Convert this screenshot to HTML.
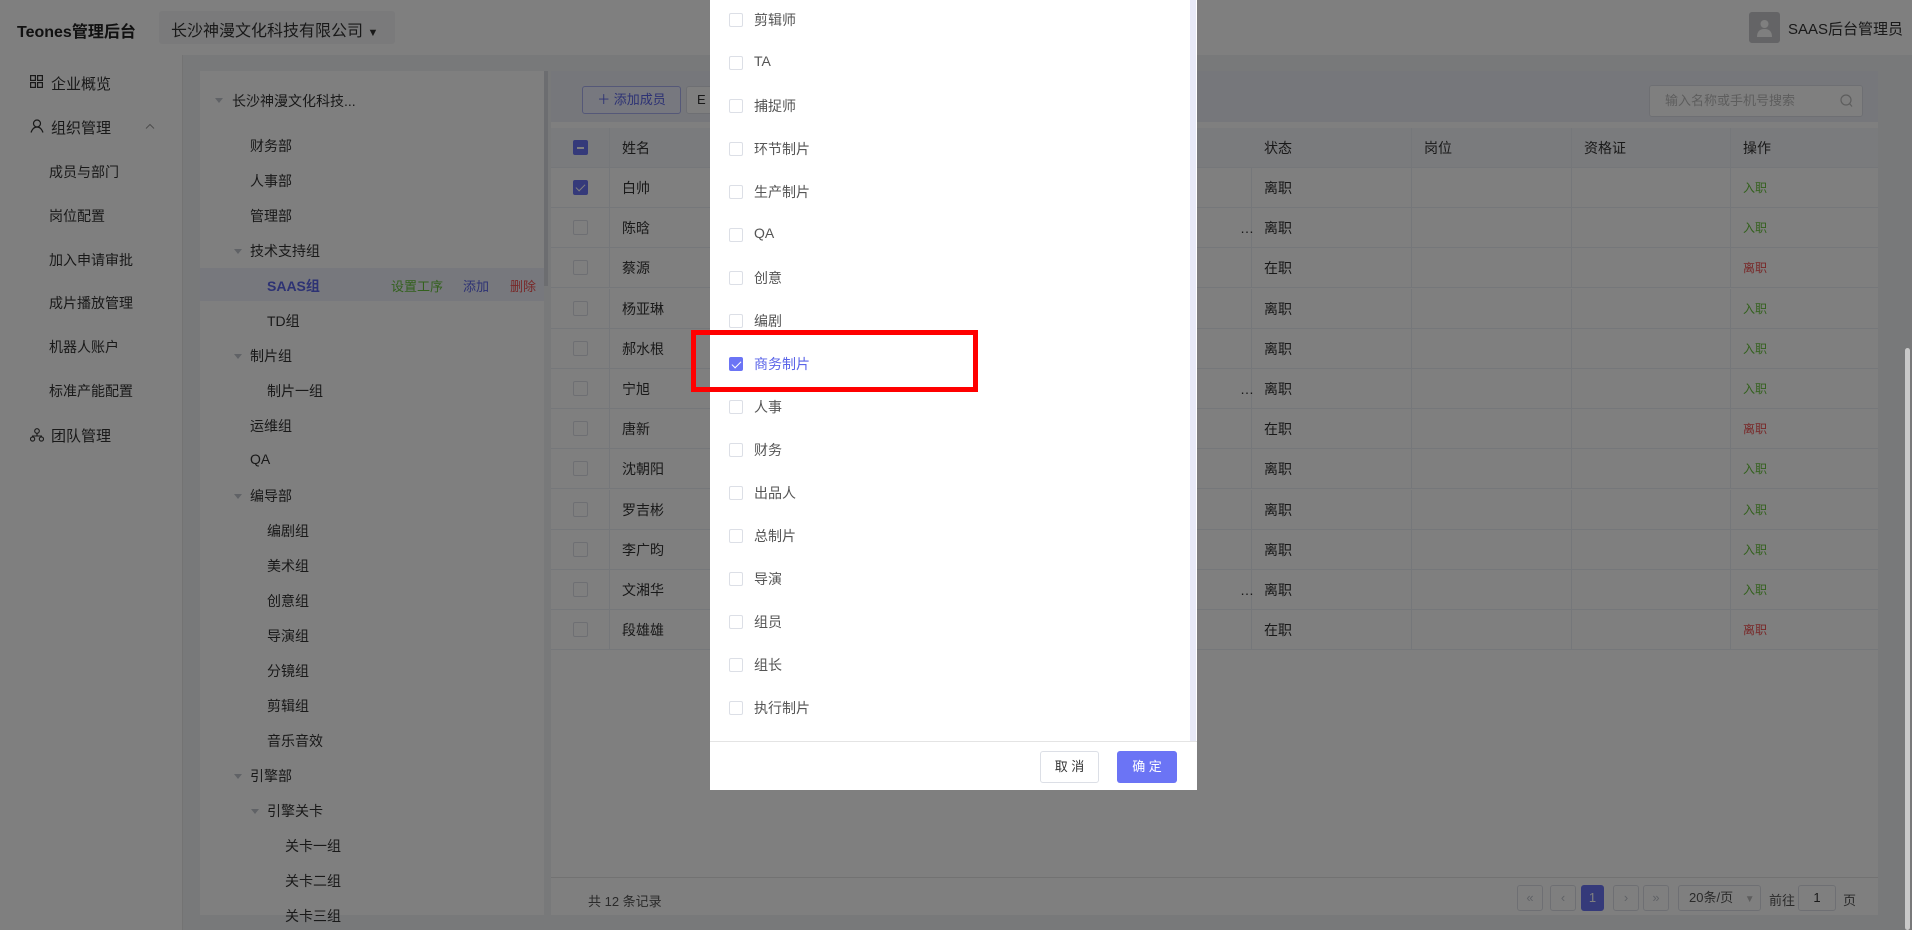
<!DOCTYPE html>
<html><head><meta charset="utf-8"><style>
*{box-sizing:border-box;margin:0;padding:0}
body{width:1912px;height:930px;overflow:hidden;position:relative;background:#f0f2f5;font-family:"Liberation Sans","Noto Sans CJK SC",sans-serif;font-size:14px;color:#333}
.a{position:absolute;white-space:nowrap}
.cb{position:absolute;width:15px;height:15px;border:1px solid #dcdfe6;border-radius:2px;background:#fff}
.cbon{background:#6b74f5;border-color:#6b74f5}
.cbon:after{content:"";position:absolute;left:4px;top:1px;width:4px;height:8px;border:solid #fff;border-width:0 1.5px 1.5px 0;transform:rotate(45deg)}
.cbind{background:#6b74f5;border-color:#6b74f5}
.row{position:absolute;left:551px;width:1327px;height:40px;border-bottom:1px solid #ebeef5;background:#fff}
.cell{position:absolute;top:0;height:40px;line-height:40px;border-right:1px solid #ebeef5}
.tr{position:absolute;font-size:14px;color:#333}
.arr{position:absolute;width:0;height:0;border-left:4px solid transparent;border-right:4px solid transparent;border-top:5px solid #c0c4cc}
.mi{position:absolute;left:49px;font-size:14px;color:#333}
.pg{position:absolute;top:885px;height:26px;width:26px;border:1px solid #dcdfe6;border-radius:3px;background:#fff;color:#c0c4cc;text-align:center;line-height:24px;font-size:13px}
.it{position:absolute;left:754px;font-size:14px;color:#555}
</style></head><body>
<div class="a" style="left:0;top:0;width:1912px;height:55px;background:#fff"></div>
<div class="a" style="left:17px;top:18px;font-size:16px;font-weight:bold;color:#222">Teones管理后台</div>
<div class="a" style="left:159px;top:11px;width:236px;height:33px;background:#f5f5f7;border-radius:3px"></div>
<div class="a" style="left:171px;top:17px;font-size:16px;color:#333">长沙神漫文化科技有限公司 <span style="font-size:11px">▼</span></div>
<div class="a" style="left:1749px;top:12px;width:31px;height:31px;background:#c8c8cc;border-radius:3px"></div>
<svg class="a" style="left:1756px;top:18px" width="17" height="19" viewBox="0 0 17 19"><circle cx="8.5" cy="6" r="4" fill="#fff"/><path d="M1 19 Q1 11 8.5 11 Q16 11 16 19Z" fill="#fff"/></svg>
<div class="a" style="left:1788px;top:18px;font-size:15px;color:#333">SAAS后台管理员</div>
<div class="a" style="left:0;top:55px;width:183px;height:875px;background:#fff;border-right:1px solid #e6e6e6"></div>
<svg class="a" style="left:30px;top:75px" width="13" height="13" viewBox="0 0 13 13" fill="none" stroke="#333" stroke-width="1.2"><rect x=".6" y=".6" width="4.8" height="4.8"/><rect x="7.6" y=".6" width="4.8" height="4.8"/><rect x=".6" y="7.6" width="4.8" height="4.8"/><rect x="7.6" y="7.6" width="4.8" height="4.8"/></svg>
<div class="mi" style="left:51px;top:73px;font-size:15px">企业概览</div>
<svg class="a" style="left:30px;top:119px" width="14" height="14" viewBox="0 0 14 14" fill="none" stroke="#333" stroke-width="1.2"><circle cx="7" cy="4.5" r="3.5"/><path d="M1 13.5 Q3 8 7 8 Q11 8 13 13.5"/></svg>
<div class="mi" style="left:51px;top:117px;font-size:15px">组织管理</div>
<svg class="a" style="left:145px;top:123px" width="10" height="6" viewBox="0 0 10 6" fill="none" stroke="#999" stroke-width="1"><path d="M1 5.5 L5 1.5 L9 5.5"/></svg>
<div class="mi" style="top:162px">成员与部门</div>
<div class="mi" style="top:206px">岗位配置</div>
<div class="mi" style="top:250px">加入申请审批</div>
<div class="mi" style="top:293px">成片播放管理</div>
<div class="mi" style="top:337px">机器人账户</div>
<div class="mi" style="top:381px">标准产能配置</div>
<svg class="a" style="left:30px;top:428px" width="14" height="14" viewBox="0 0 14 14" fill="none" stroke="#333" stroke-width="1.1"><circle cx="7" cy="3" r="2.3"/><circle cx="2.6" cy="11" r="2.1"/><circle cx="11.4" cy="11" r="2.1"/><path d="M7 5.3V8M2.6 9V8H11.4V9"/></svg>
<div class="mi" style="left:51px;top:425px;font-size:15px">团队管理</div>
<div class="a" style="left:200px;top:71px;width:344px;height:844px;background:#fff"></div>
<div class="a" style="left:544px;top:71px;width:4px;height:215px;background:#d8dae0"></div>
<div class="arr" style="left:215px;top:98px"></div>
<div class="tr" style="left:232px;top:91px">长沙神漫文化科技...</div>
<div class="a" style="left:200px;top:268px;width:344px;height:33px;background:#eef0fb"></div>
<div class="tr" style="left:250px;top:136px">财务部</div>
<div class="tr" style="left:250px;top:171px">人事部</div>
<div class="tr" style="left:250px;top:206px">管理部</div>
<div class="arr" style="left:234px;top:249px"></div><div class="tr" style="left:250px;top:241px">技术支持组</div>
<div class="tr" style="left:267px;top:276px;font-weight:bold;color:#5a64e8">SAAS组</div>
<div class="tr" style="left:391px;top:276px;color:#67c23a;font-size:13px">设置工序</div>
<div class="tr" style="left:463px;top:276px;color:#5a64e8;font-size:13px">添加</div>
<div class="tr" style="left:510px;top:276px;color:#f05050;font-size:13px">删除</div>
<div class="tr" style="left:267px;top:311px">TD组</div>
<div class="arr" style="left:234px;top:354px"></div><div class="tr" style="left:250px;top:346px">制片组</div>
<div class="tr" style="left:267px;top:381px">制片一组</div>
<div class="tr" style="left:250px;top:416px">运维组</div>
<div class="tr" style="left:250px;top:451px">QA</div>
<div class="arr" style="left:234px;top:494px"></div><div class="tr" style="left:250px;top:486px">编导部</div>
<div class="tr" style="left:267px;top:521px">编剧组</div>
<div class="tr" style="left:267px;top:556px">美术组</div>
<div class="tr" style="left:267px;top:591px">创意组</div>
<div class="tr" style="left:267px;top:626px">导演组</div>
<div class="tr" style="left:267px;top:661px">分镜组</div>
<div class="tr" style="left:267px;top:696px">剪辑组</div>
<div class="tr" style="left:267px;top:731px">音乐音效</div>
<div class="arr" style="left:234px;top:774px"></div><div class="tr" style="left:250px;top:766px">引擎部</div>
<div class="arr" style="left:251px;top:809px"></div><div class="tr" style="left:267px;top:801px">引擎关卡</div>
<div class="tr" style="left:285px;top:836px">关卡一组</div>
<div class="tr" style="left:285px;top:871px">关卡二组</div>
<div class="tr" style="left:285px;top:906px">关卡三组</div>
<div class="a" style="left:551px;top:71px;width:1327px;height:844px;background:#fff"></div>
<div class="a" style="left:551px;top:71px;width:1327px;height:51px;background:#eceef6"></div>
<div class="a" style="left:582px;top:86px;width:99px;height:28px;border:1px solid #aab0f0;background:#eef0ff;border-radius:3px;color:#5a64e8;font-size:13px;line-height:26px;text-align:center">＋ 添加成员</div>
<div class="a" style="left:686px;top:86px;width:40px;height:28px;border:1px solid #dcdfe6;background:#fff;border-radius:3px;line-height:26px;padding-left:10px;font-size:13px">E</div>
<div class="a" style="left:1649px;top:85px;width:214px;height:32px;border:1px solid #dcdfe6;background:#fff;border-radius:3px;color:#bbb;font-size:13px;line-height:30px;padding-left:15px">输入名称或手机号搜索</div>
<svg class="a" style="left:1840px;top:94px" width="13" height="14" viewBox="0 0 13 14" fill="none" stroke="#bbb" stroke-width="1.2"><circle cx="6" cy="6" r="5"/><path d="M9.5 9.5L12 12.5"/></svg>
<div class="row" style="top:128px;background:#f5f6fa">
<div class="cell" style="left:0;width:59px"><div class="cb cbind" style="left:22px;top:12px"></div><div class="a" style="left:26px;top:19px;width:7px;height:1.5px;background:#fff"></div></div>
<div class="cell" style="left:59px;width:642px;padding-left:12px;border-right:0">姓名</div>
<div class="cell" style="left:701px;width:160px;padding-left:12px">状态</div>
<div class="cell" style="left:861px;width:160px;padding-left:12px">岗位</div>
<div class="cell" style="left:1021px;width:159px;padding-left:12px">资格证</div>
<div class="cell" style="left:1180px;width:147px;padding-left:12px;border-right:0">操作</div>
</div>
<div id="rows"></div>
<script>
var d=[["白帅","离职",0,1,0],["陈晗","离职",0,0,1],["蔡源","在职",1,0,0],["杨亚琳","离职",0,0,0],["郝水根","离职",0,0,0],["宁旭","离职",0,0,1],["唐新","在职",1,0,0],["沈朝阳","离职",0,0,0],["罗吉彬","离职",0,0,0],["李广昀","离职",0,0,0],["文湘华","离职",0,0,1],["段雄雄","在职",1,0,0]];
var h="";d.forEach(function(r,i){var t=168+i*40.2;
h+='<div class="row" style="top:'+t+'px"><div class="cell" style="left:0;width:59px"><div class="cb'+(r[3]?' cbon':'')+'" style="left:22px;top:12px"></div></div><div class="cell" style="left:59px;width:642px;padding-left:12px;border-right:1px solid #ebeef5">'+r[0]+(r[4]?'<span style="position:absolute;left:630px">…</span>':'')+'</div><div class="cell" style="left:701px;width:160px;padding-left:12px">'+r[1]+'</div><div class="cell" style="left:861px;width:160px"></div><div class="cell" style="left:1021px;width:159px"></div><div class="cell" style="left:1180px;width:147px;padding-left:12px;border-right:0;font-size:12px;color:'+(r[2]?'#f05050':'#67c23a')+'">'+(r[2]?'离职':'入职')+'</div></div>';});
document.getElementById('rows').innerHTML=h;
</script>
<div class="a" style="left:551px;top:877px;width:1327px;height:1px;background:#e4e4e4"></div>
<div class="a" style="left:588px;top:891px;font-size:13px;color:#555">共 12 条记录</div>
<div class="pg" style="left:1517px">«</div>
<div class="pg" style="left:1550px">‹</div>
<div class="pg" style="left:1581px;width:23px;background:#6b74f5;border-color:#6b74f5;color:#fff">1</div>
<div class="pg" style="left:1613px">›</div>
<div class="pg" style="left:1643px">»</div>
<div class="pg" style="left:1678px;width:83px;color:#555;text-align:left;padding-left:10px">20条/页 <span style="color:#bbb;font-size:10px;margin-left:8px">▼</span></div>
<div class="a" style="left:1769px;top:890px;font-size:13px;color:#555">前往</div>
<div class="pg" style="left:1798px;width:38px;color:#333">1</div>
<div class="a" style="left:1843px;top:890px;font-size:13px;color:#555">页</div>
<div class="a" style="left:0;top:0;width:1912px;height:930px;background:rgba(0,0,0,.5)"></div>
<div class="a" style="left:1905px;top:348px;width:5px;height:582px;background:#c9c9c9;border-radius:3px"></div>
<div class="a" style="left:710px;top:0;width:487px;height:790px;background:#fff"></div>
<div class="a" style="left:1190px;top:0;width:6px;height:741px;background:#e8eaf8"></div>
<div class="a" style="left:710px;top:741px;width:487px;height:1px;background:#e4e4e4"></div>
<div class="a" style="left:1040px;top:751px;width:59px;height:32px;border:1px solid #dcdfe6;border-radius:3px;font-size:13px;line-height:30px;text-align:center;color:#333">取 消</div>
<div class="a" style="left:1117px;top:751px;width:60px;height:32px;background:#6b74f5;border-radius:3px;font-size:13px;line-height:32px;text-align:center;color:#fff">确 定</div>
<div id="items"></div>
<script>
var it=["剪辑师","TA","捕捉师","环节制片","生产制片","QA","创意","编剧","商务制片","人事","财务","出品人","总制片","导演","组员","组长","执行制片"];
var s="";it.forEach(function(n,i){var y=20+i*43;var on=i==8;
s+='<div class="cb'+(on?' cbon':'')+'" style="left:729px;top:'+(y-7)+'px;width:14px;height:14px"></div><div class="it" style="top:'+(y-10)+'px;'+(on?'color:#5a64e8':'')+'">'+n+'</div>';});
document.getElementById('items').innerHTML=s;
</script>
<div class="a" style="left:691px;top:330px;width:287px;height:62px;border:5px solid #f00"></div>
</body></html>
